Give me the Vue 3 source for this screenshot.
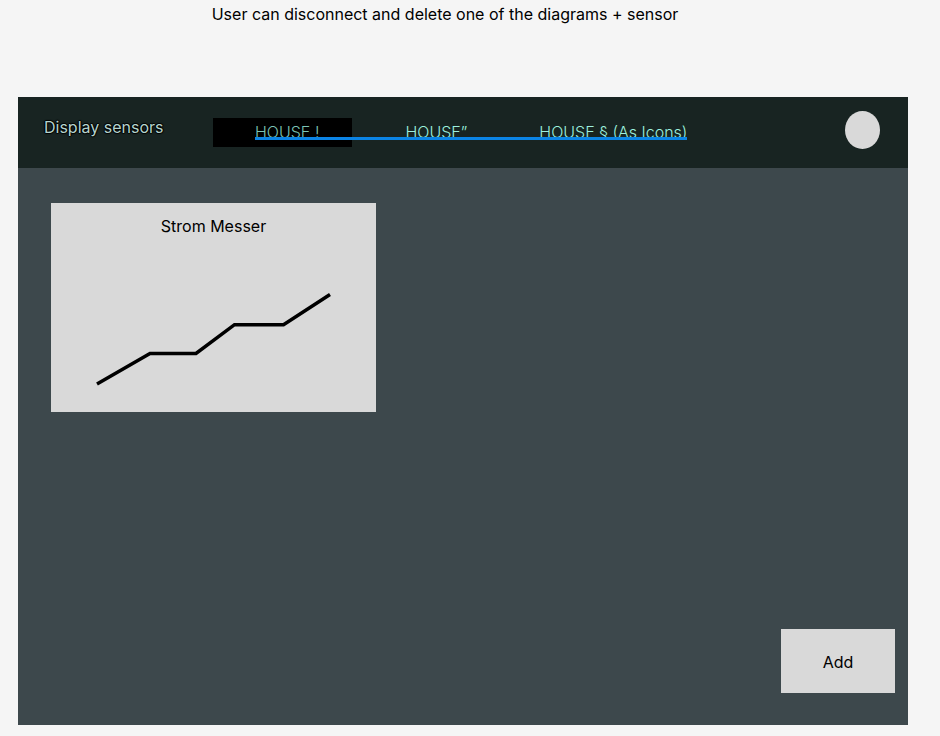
<script setup>
import { ref } from 'vue'

const houses = ['HOUSE !', 'HOUSE”', 'HOUSE § (As Icons)']
const active = ref(0)
const sensors = [
  { name: 'Strom Messer', points: '46,181 99,150.5 145,150.5 183.5,121.7 232.5,121.7 279,91.5' }
]
</script>

<template>
  <div class="page">
    <p class="note">User can disconnect and delete one of the diagrams + sensor</p>
    <div class="window">
      <header class="bar">
        <h1 class="title">Display sensors</h1>
        <nav class="tabs">
          <a
            v-for="(house, i) in houses"
            :key="house"
            href="#"
            class="tab"
            :class="{ active: i === active }"
            @click.prevent="active = i"
          >{{ house }}</a>
        </nav>
        <span class="avatar"></span>
      </header>
      <main class="board">
        <article v-for="s in sensors" :key="s.name" class="card">
          <h2 class="name">{{ s.name }}</h2>
          <svg class="chart" viewBox="0 0 325 209" aria-hidden="true">
            <polyline :points="s.points" fill="none" stroke="#000" stroke-width="3.5" />
          </svg>
        </article>
        <button type="button" class="add">Add</button>
      </main>
    </div>
  </div>
</template>

<style>
body {
  margin: 0;
  background: #f5f5f5;
}
</style>

<style scoped>
.page {
  box-sizing: border-box;
  min-height: 100vh;
  display: flex;
  flex-direction: column;
  padding: 4px 32px 11px 18px;
  font-family: Inter, sans-serif;
  font-size: 16px;
  line-height: 20px;
  color: #000;
}

.note {
  margin: 0 0 73px;
  padding-right: 36px;
  text-align: center;
}

.window {
  flex: 1;
  display: flex;
  flex-direction: column;
  background: #3d484c;
}

.bar {
  display: flex;
  align-items: flex-start;
  height: 71px;
  background: #182422;
}

.title {
  box-sizing: border-box;
  width: 195px;
  margin: 0;
  padding: 20px 0 0 26px;
  font-size: 16px;
  font-weight: 400;
  color: #b5d4ce;
  text-shadow: 1px 0 1px #000, -1px 0 1px #000, 0 1px 1px #000, 0 -1px 1px #000;
}

.tabs {
  position: relative;
  display: flex;
  margin-top: 21px;
}

.tabs::after {
  content: '';
  position: absolute;
  left: 42px;
  right: 0;
  top: 19px;
  height: 3px;
  background: #0b84e5;
}

.tab {
  margin-right: 72px;
  line-height: 29px;
  font-weight: 300;
  color: #9cf0df;
  text-decoration: none;
}

.tab:last-child {
  margin-right: 0;
}

.tab.active {
  margin-right: 53px;
  padding: 0 33px 0 42px;
  background: #000;
  color: #7cc4b5;
}

.avatar {
  width: 35px;
  height: 38px;
  margin: 14px 28px 0 auto;
  border-radius: 50%;
  background: #d9d9d9;
}

.board {
  flex: 1;
  display: flex;
  flex-direction: column;
  align-items: flex-start;
  padding: 35px 13px 32px 33px;
}

.card {
  display: grid;
  width: 325px;
  background: #d9d9d9;
}

.name {
  grid-area: 1 / 1;
  margin: 13px 0 0;
  font-size: 16px;
  font-weight: 400;
  text-align: center;
}

.chart {
  grid-area: 1 / 1;
  display: block;
  width: 100%;
}

.add {
  width: 114px;
  height: 64px;
  margin: auto 0 0 auto;
  padding: 2px 0 0;
  border: 0;
  background: #d9d9d9;
  font: inherit;
  color: #000;
}
</style>
